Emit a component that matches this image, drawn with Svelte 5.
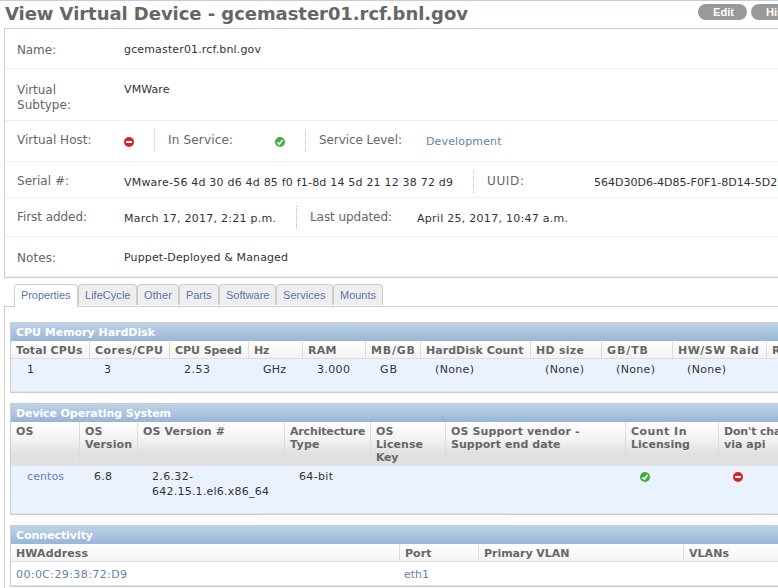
<script>
  // Each text is stored with its run width: [text, width]
  const details = [
    { height: 40, top: 14, shift: -1, fields: [{ label: [['Name:', 39]], value: ['gcemaster01.rcf.bnl.gov', 137] }] },
    { height: 52, top: 14, shift: -1, fields: [{ label: [['Virtual', 39], ['Subtype:', 54]], value: ['VMWare', 45.5] }] },
    {
      height: 41, top: 12, shift: 1,
      fields: [
        { label: [['Virtual Host:', 74.5]], icon: 'no', width: 149 },
        { label: [['In Service:', 65]], icon: 'yes', width: 151 },
        { label: [['Service Level:', 83]], value: ['Development', 75.5], link: true }
      ]
    },
    {
      height: 36, top: 12, shift: 1,
      fields: [
        { label: [['Serial #:', 52]], value: ['VMware-56 4d 30 d6 4d 85 f0 f1-8d 14 5d 21 12 38 72 d9', 329], width: 468 },
        { label: [['UUID:', 37]], value: ['564D30D6-4D85-F0F1-8D14-5D21123872D9', 248] }
      ]
    },
    {
      height: 39, top: 12, shift: 1,
      fields: [
        { label: [['First added:', 70]], value: ['March 17, 2017, 2:21 p.m.', 152], width: 291 },
        { label: [['Last updated:', 82]], value: ['April 25, 2017, 10:47 a.m.', 151] }
      ]
    },
    { height: 40, top: 14, shift: -1, fields: [{ label: [['Notes:', 39]], value: ['Puppet-Deployed & Managed', 164] }] }
  ];

  const tabs = [
    ['Properties', 49.5, 64], ['LifeCycle', 45.5, 59], ['Other', 28, 42], ['Parts', 25.5, 40],
    ['Software', 43.5, 57], ['Services', 42.5, 57], ['Mounts', 36, 50]
  ];

  const modules = [
    {
      title: ['CPU Memory HardDisk', 139], head: 17, body: 32, line: true,
      cols: [
        { w: 78, h: [['Total CPUs', 66.5]], v: [['1', 0]] },
        { w: 80, h: [['Cores/CPU', 68]], v: [['3', 0]] },
        { w: 79, h: [['CPU Speed', 67]], v: [['2.53', 26]] },
        { w: 54, h: [['Hz', 15.5]], v: [['GHz', 23]] },
        { w: 63, h: [['RAM', 28.5]], v: [['3.000', 33]] },
        { w: 55, h: [['MB/GB', 44]], v: [['GB', 17]] },
        { w: 110, h: [['HardDisk Count', 97.5]], v: [['(None)', 39]] },
        { w: 71, h: [['HD size', 48]], v: [['(None)', 39]] },
        { w: 71, h: [['GB/TB', 41]], v: [['(None)', 39]] },
        { w: 94, h: [['HW/SW Raid', 81]], v: [['(None)', 39]] },
        { w: 90, h: [['Raid Type', 62]], v: [] }
      ]
    },
    {
      title: ['Device Operating System', 155], head: 44, body: 47,
      cols: [
        { w: 68, h: [['OS', 17.5]], v: [['centos', 37]], link: true },
        { w: 58, h: [['OS', 17.5], ['Version', 47]], v: [['6.8', 18]] },
        { w: 147, h: [['OS Version #', 82]], v: [['2.6.32-', 41], ['642.15.1.el6.x86_64', 117]] },
        { w: 86, h: [['Architecture', 75.5], ['Type', 29.5]], v: [['64-bit', 34]] },
        { w: 75, h: [['OS', 17.5], ['License', 47], ['Key', 22.5]], v: [] },
        { w: 180, h: [['OS Support vendor -', 128.5], ['Support end date', 109.5]], v: [] },
        { w: 93, h: [['Count In', 55.5], ['Licensing', 59]], v: [], icon: 'yes' },
        { w: 130, h: [["Don't change", 80], ['via api', 41.5]], v: [], icon: 'no' }
      ]
    },
    {
      title: ['Connectivity', 77], head: 17, body: 23, line: true, plain: true,
      cols: [
        { w: 388, h: [['HWAddress', 72]], v: [['00:0C:29:38:72:D9', 111]], link: true },
        { w: 79, h: [['Port', 26.5]], v: [['eth1', 25]], link: true },
        { w: 205, h: [['Primary VLAN', 85.5]], v: [] },
        { w: 160, h: [['VLANs', 40]], v: [] }
      ]
    }
  ];

  // Spreads the letters of a text evenly over the given width
  function fit(node, width) {
    const n = node.textContent.length;
    if (!width || n < 2) return;
    node.style.letterSpacing = (width - node.getBoundingClientRect().width) / (n - 1) + 'px';
  }
</script>

{#snippet run(t)}<span class="run" use:fit={t[1]}>{t[0]}</span>{/snippet}

{#snippet lines(list)}
  {#each list as t}<div>{@render run(t)}</div>{/each}
{/snippet}

{#snippet icon(kind)}
  <svg class="icon" width="10" height="10" viewBox="0 0 10 10">
    {#if kind === 'yes'}
      <circle cx="5" cy="5" r="5" fill="#41ad3f" />
      <path d="M2.4 5.2 4.3 7.2 7.6 2.9" fill="none" stroke="#fff" stroke-width="1.6" />
    {:else}
      <circle cx="5" cy="5" r="5" fill="#dd2023" />
      <path d="M2 4h6v2H2z" fill="#fff" />
    {/if}
  </svg>
{/snippet}

<div class="page">
  <header>
    <h1>{@render run(['View Virtual Device - gcemaster01.rcf.bnl.gov', 463])}</h1>
    <nav>
      <a href="#edit">{@render run(['Edit', 21])}</a>
      <a href="#history">{@render run(['History', 38])}</a>
    </nav>
  </header>

  <section class="details">
    {#each details as row}
      <div class="row" style:height="{row.height}px">
        {#each row.fields as f}
          <div class="field" style:width={f.width ? f.width + 'px' : 'auto'}>
            <div class="label" style:padding-top="{row.top - 8}px">{@render lines(f.label)}</div>
            <div class="value" class:link={f.link} style:padding-top="{row.top - 8 + row.shift}px">
              {#if f.icon}<div class="mark">{@render icon(f.icon)}</div>{:else}{@render run(f.value)}{/if}
            </div>
          </div>
        {/each}
      </div>
    {/each}
  </section>

  <div class="tabs">
    {#each tabs as t, i}
      <div class="tab" class:active={i === 0} style:width="{t[2]}px">{@render run(t)}</div>
    {/each}
  </div>

  <main>
    {#each modules as m}
      <section class="module" class:line={m.line} class:plain={m.plain}>
        <h2>{@render run(m.title)}</h2>
        <div class="thead" style:height="{m.head}px">
          {#each m.cols as c}
            <div class="th" style:width="{c.w}px">{@render lines(c.h)}</div>
          {/each}
        </div>
        <div class="tbody" style:height="{m.body}px">
          {#each m.cols as c}
            <div class="td" class:link={c.link} style:width="{c.w}px">
              {#if c.icon}{@render icon(c.icon)}{/if}
              {@render lines(c.v)}
            </div>
          {/each}
        </div>
      </section>
    {/each}
  </main>
</div>

<style>
  :global(body) { margin: 0; background: #fff; overflow: hidden; }
  .page {
    box-sizing: border-box;
    width: 778px;
    height: 588px;
    overflow: hidden;
    border-top: 1px solid #c3cde2;
    font-family: Verdana, "DejaVu Sans", sans-serif;
    font-size: 11px;
    color: #333;
    white-space: nowrap;
  }
  .run { display: inline-block; white-space: pre; }
  .link { color: #6380b4; }
  .icon { display: block; }

  header { display: flex; justify-content: space-between; height: 27px; padding-left: 5px; }
  h1 { margin: 0; font-size: 18px; line-height: 26px; color: #666; }
  nav { display: flex; gap: 4px; padding-top: 3px; width: 80px; flex: none; }
  nav a {
    flex: none;
    height: 16px;
    padding: 0 13px 0 15px;
    border-radius: 8px;
    background: #999;
    color: #fff;
    font: bold 11px/17px "Liberation Sans", Arial, sans-serif;
    text-decoration: none;
  }
  nav a:first-child { width: 21px; }

  .details { margin-left: 4px; border: 1px solid #ccc; border-right: 0; }
  .row { box-sizing: border-box; display: flex; padding-top: 8px; border-bottom: 1px solid #eee; }
  .field { box-sizing: border-box; flex: none; display: flex; height: 23px; padding-left: 12px; line-height: 15px; }
  .field + .field { padding-left: 13px; border-left: 1px dotted #bbb; }
  .label { width: 107px; flex: none; font-size: 12px; color: #666; }
  .mark { padding-top: 3px; }

  .tabs { display: flex; height: 22px; margin: 6px 0 0 14px; }
  .tab {
    box-sizing: border-box;
    flex: none;
    height: 21px;
    padding-left: 6px;
    border: 1px solid #ccc;
    border-bottom: 0;
    border-radius: 4px 4px 0 0;
    background: #eee;
    color: #5b75ad;
    font: 11px/21px "Liberation Sans", Arial, sans-serif;
  }
  .tab.active { position: relative; height: 23px; background: #fff; }

  main { margin-left: 4px; padding: 15px 0 0 5px; border: 1px solid #ccc; border-right: 0; height: 300px; }
  .module { border: 1px solid #ccc; border-right: 0; margin-bottom: 10px; width: 860px; }
  h2 {
    margin: 0;
    height: 18px;
    padding-left: 5px;
    background: linear-gradient(#bed3e9, #98b5d6);
    color: #fff;
    font-size: 11px;
    line-height: 20px;
  }
  .thead, .tbody { display: flex; }
  .thead { background: linear-gradient(#fff, #f3f3f3 17px, #e1e1e1 31px); }
  .line .thead { border-bottom: 1px solid #ddd; }
  .th {
    box-sizing: border-box;
    flex: none;
    padding: 3px 0 0 5px;
    color: #666;
    font-weight: bold;
    line-height: 13px;
  }
  .th + .th { border-left: 1px solid #ddd; }
  .tbody { background: #ebf2ff; border-bottom: 1px solid #e2e2e2; }
  .td { box-sizing: border-box; flex: none; padding: 3px 0 0 15px; line-height: 15px; }
  .td:first-child { padding-left: 16px; }
  .td .icon { margin-top: 3px; }
  .plain .tbody { background: #fff; }
  .plain .td { padding: 5px 0 0 5px; }
</style>
